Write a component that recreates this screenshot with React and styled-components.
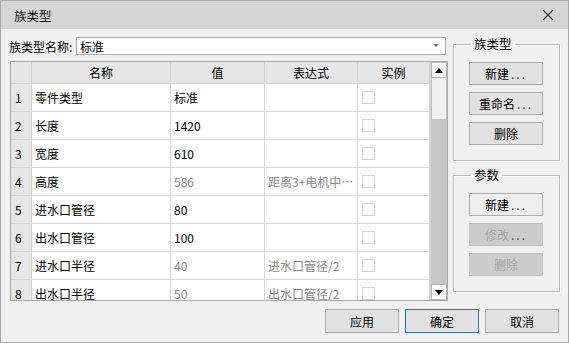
import React from 'react'
import styled, { createGlobalStyle } from 'styled-components'

const GlobalStyle = createGlobalStyle`
  html, body { margin: 0; padding: 0; background: #f0f0f0; }
  body { font-family: "Noto Sans CJK SC", "Noto Sans", sans-serif; font-size: 12px; color: #000; }
  * { box-sizing: border-box; }
`

const rows = [
  { name: '零件类型', value: '标准' },
  { name: '长度', value: '1420' },
  { name: '宽度', value: '610' },
  { name: '高度', value: '586', formula: '距离3+电机中…', calc: true },
  { name: '进水口管径', value: '80' },
  { name: '出水口管径', value: '100' },
  { name: '进水口半径', value: '40', formula: '进水口管径/2', calc: true },
  { name: '出水口半径', value: '50', formula: '出水口管径/2', calc: true },
]

export default function App() {
  return (
    <>
      <GlobalStyle />
      <Window>
        <TitleBar>
          <Title>族类型</Title>
          <CloseButton>
            <svg width="12" height="12" viewBox="0 0 12 12">
              <path d="M1 1L11 11M11 1L1 11" stroke="#333" strokeWidth="1.1" />
            </svg>
          </CloseButton>
        </TitleBar>
        <Body>
          <LeftColumn>
            <NameRow>
              <Label>族类型名称:</Label>
              <Combo>
                <span>标准</span>
                <svg width="6" height="4" viewBox="0 0 6 4">
                  <path d="M0 0H6L3 3Z" fill="#777" />
                </svg>
              </Combo>
            </NameRow>
            <Table>
              <Grid>
                <HeadCell />
                <HeadCell>名称</HeadCell>
                <HeadCell>值</HeadCell>
                <HeadCell>表达式</HeadCell>
                <HeadCell>实例</HeadCell>
                {rows.map((r, i) => (
                  <React.Fragment key={i}>
                    <NumCell>{i + 1}</NumCell>
                    <Cell>{r.name}</Cell>
                    <Cell $muted={r.calc}>{r.value}</Cell>
                    <Cell $muted>{r.formula}</Cell>
                    <Cell><Check /></Cell>
                  </React.Fragment>
                ))}
              </Grid>
              <ScrollBar>
                <ArrowBox>
                  <svg width="8" height="5" viewBox="0 0 8 5"><path d="M0 5L4 0L8 5Z" fill="#000" /></svg>
                </ArrowBox>
                <Thumb />
                <Track />
                <ArrowBox>
                  <svg width="8" height="5" viewBox="0 0 8 5"><path d="M0 0L8 0L4 5Z" fill="#000" /></svg>
                </ArrowBox>
              </ScrollBar>
            </Table>
          </LeftColumn>
          <RightColumn>
            <Group>
              <Legend>族类型</Legend>
              <Button>新建<Dots>...</Dots></Button>
              <Button>重命名<Dots>...</Dots></Button>
              <Button>删除</Button>
            </Group>
            <Group>
              <Legend>参数</Legend>
              <Button $light>新建<Dots>...</Dots></Button>
              <Button disabled>修改<Dots>...</Dots></Button>
              <Button disabled>删除</Button>
            </Group>
          </RightColumn>
        </Body>
        <Footer>
          <Button>应用</Button>
          <Button $primary>确定</Button>
          <Button>取消</Button>
        </Footer>
      </Window>
    </>
  )
}

const Window = styled.div`
  width: 569px;
  height: 343px;
  border: 1px solid #a8a8a8;
  background: #f0f0f0;
  display: flex;
  flex-direction: column;
`

const TitleBar = styled.div`
  height: 28px;
  background: #d4d4d4;
  display: flex;
  align-items: center;
  justify-content: space-between;
  padding: 0 14px 0 13px;
`

const Title = styled.div`
  font-size: 12.5px;
  color: #111;
`

const CloseButton = styled.div`
  display: flex;
  align-items: center;
`

const Body = styled.div`
  display: flex;
  padding: 8px 0 0 8px;
  gap: 7px;
`

const LeftColumn = styled.div`
  width: 437px;
  display: flex;
  flex-direction: column;
  gap: 6px;
`

const NameRow = styled.div`
  display: flex;
  align-items: center;
  height: 18px;
`

const Label = styled.div`
  width: 67px;
  white-space: nowrap;
`

const Combo = styled.div`
  flex: 1;
  height: 18px;
  background: #fff;
  border: 1px solid #ababab;
  display: flex;
  align-items: center;
  justify-content: space-between;
  padding: 0 6px 0 3px;
`

const Table = styled.div`
  display: flex;
  width: 438px;
  height: 240px;
  border: 1px solid #a9a9a9;
  background: #fff;
  overflow: hidden;
  margin-left: 1px;
`

const Grid = styled.div`
  display: grid;
  grid-template-columns: 21px 139px 94px 93px 72px;
  grid-template-rows: 22px;
  grid-auto-rows: 28px;
  align-content: start;
`

const HeadCell = styled.div`
  background: #e6e6e6;
  border-right: 1px solid #d2d2d2;
  border-bottom: 1px solid #d2d2d2;
  display: flex;
  align-items: center;
  justify-content: center;
`

const NumCell = styled.div`
  background: #e6e6e6;
  border-right: 1px solid #d2d2d2;
  border-bottom: 1px solid #d2d2d2;
  display: flex;
  align-items: center;
  padding-left: 4px;
`

const Cell = styled.div`
  border-right: 1px solid #d8d8d8;
  border-bottom: 1px solid #d8d8d8;
  display: flex;
  align-items: center;
  padding-left: 3px;
  white-space: nowrap;
  overflow: hidden;
  color: ${p => (p.$muted ? '#8a8a8a' : '#000')};
`

const Check = styled.div`
  width: 13px;
  height: 13px;
  border: 1px solid #d4d4d4;
  background: #fff;
  margin-left: 1px;
`

const ScrollBar = styled.div`
  width: 17px;
  display: flex;
  flex-direction: column;
  background: #c6c6c6;
  border-left: 1px solid #d2d2d2;
`

const ArrowBox = styled.div`
  height: 16px;
  background: #fdfdfd;
  border: 1px solid #b5b5b5;
  display: flex;
  align-items: center;
  justify-content: center;
`

const Thumb = styled.div`
  height: 42px;
  background: #efefef;
  border: 1px solid #c2c2c2;
  border-top: none;
`

const Track = styled.div`
  flex: 1;
`

const RightColumn = styled.div`
  width: 107px;
  display: flex;
  flex-direction: column;
  gap: 7px;
`

const Group = styled.fieldset`
  margin: 0;
  padding: 11px 0 15px 15px;
  border: 1px solid #bcbcbc;
  box-shadow: inset 1px 1px 0 #fff, 1px 1px 0 #fff;
  display: flex;
  flex-direction: column;
  gap: 7px;
  min-width: 0;
`

const Legend = styled.legend`
  padding: 0 3px;
  margin-left: 2px;
  font-size: 12.5px;
  line-height: 14px;
`

const Button = styled.button`
  width: 74px;
  height: 23px;
  font-family: inherit;
  font-size: 12px;
  color: ${p => (p.disabled ? '#a3a3a3' : '#000')};
  background: ${p => (p.disabled ? '#cccccc' : p.$light ? '#eeeeee' : '#e1e1e1')};
  border: 1px solid ${p => (p.$primary ? '#2f73b8' : p.disabled ? '#bfbfbf' : '#adadad')};
  padding: 0;
  display: flex;
  align-items: center;
  justify-content: center;
`

const Dots = styled.span`
  letter-spacing: 2px;
  margin-left: 2px;
  color: #444;
`

const Footer = styled.div`
  display: flex;
  justify-content: flex-end;
  gap: 6px;
  padding: 8px 9px 0 0;
  & > button { height: 24px; }
`
